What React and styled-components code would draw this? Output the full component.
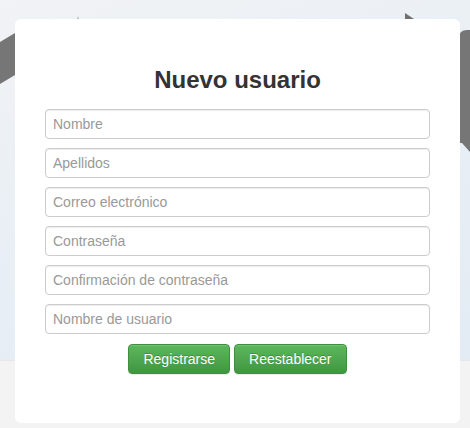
import React from 'react';
import styled, { createGlobalStyle } from 'styled-components';

const GlobalStyle = createGlobalStyle`
  html, body {
    margin: 0;
    padding: 0;
  }
  body {
    font-family: "Liberation Sans", Arial, Helvetica, sans-serif;
    font-size: 14px;
    color: #333;
  }
  * {
    box-sizing: border-box;
  }
`;

const Page = styled.div`
  position: relative;
  width: 470px;
  height: 428px;
  overflow: hidden;
  padding: 19px 10px 0 15px;
  background:
    linear-gradient(to bottom, transparent 0, transparent 360px, #e7e7e7 360px, #e7e7e7 361px, #f3f3f3 361px),
    linear-gradient(160deg, #f1f3f5 0%, #e9eff5 40%, #e1eaf4 100%);
`;

const Backdrop = styled.svg`
  position: absolute;
  left: 0;
  top: 0;
  width: 470px;
  height: 360px;
`;

const Card = styled.div`
  position: relative;
  width: 445px;
  height: 404px;
  background: #fff;
  border-radius: 6px;
  padding: 46px 30px 0 30px;
  display: flex;
  flex-direction: column;
  align-items: stretch;
`;

const Title = styled.h1`
  margin: 0 0 14px 0;
  text-align: center;
  font-size: 24px;
  font-weight: bold;
  line-height: 30px;
  color: #333;
`;

const Form = styled.form`
  display: flex;
  flex-direction: column;
  gap: 9px;
`;

const Input = styled.input`
  display: block;
  width: 100%;
  height: 30px;
  padding: 4px 7px;
  border: 1px solid #ccc;
  border-radius: 4px;
  box-shadow: inset 0 1px 1px rgba(0, 0, 0, 0.075);
  font-family: inherit;
  font-size: 14px;
  color: #555;
  background: #fff;
  &::placeholder {
    color: #999;
  }
`;

const Actions = styled.div`
  display: flex;
  justify-content: center;
  gap: 4px;
  margin-top: 1px;
`;

const Button = styled.button`
  height: 30px;
  padding: 0 14px;
  border: 1px solid #3e8f3e;
  border-radius: 4px;
  background: linear-gradient(to bottom, #5cb85c 0%, #419641 100%);
  box-shadow: inset 0 1px 0 rgba(255, 255, 255, 0.15), 0 1px 1px rgba(0, 0, 0, 0.075);
  color: #fff;
  font-family: inherit;
  font-size: 14px;
  text-shadow: 0 -1px 0 rgba(0, 0, 0, 0.2);
  cursor: pointer;
`;

const fields = [
  { name: 'nombre', placeholder: 'Nombre' },
  { name: 'apellidos', placeholder: 'Apellidos' },
  { name: 'correo', placeholder: 'Correo electrónico', type: 'email' },
  { name: 'password', placeholder: 'Contraseña', type: 'password' },
  { name: 'confirmacion', placeholder: 'Confirmación de contraseña', type: 'password' },
  { name: 'usuario', placeholder: 'Nombre de usuario' },
];

function App() {
  return (
    <Page>
      <GlobalStyle />
      <Backdrop viewBox="0 0 470 360">
        <polygon points="0,42 20,30 20,72 0,84" fill="#767676" />
        <polygon points="77,19 78,16 79,19" fill="#b5b8bb" />
        <polygon points="405,19 405,13 414,19" fill="#707070" />
        <path d="M459 38 Q459 30 467 30 L470 30 L470 152 L462 143 L459 143 Z" fill="#767676" />
      </Backdrop>
      <Card>
        <Title>Nuevo usuario</Title>
        <Form onSubmit={(e) => e.preventDefault()}>
          {fields.map((f) => (
            <Input key={f.name} name={f.name} type={f.type || 'text'} placeholder={f.placeholder} />
          ))}
          <Actions>
            <Button type="submit">Registrarse</Button>
            <Button type="reset">Reestablecer</Button>
          </Actions>
        </Form>
      </Card>
    </Page>
  );
}

export default App;
